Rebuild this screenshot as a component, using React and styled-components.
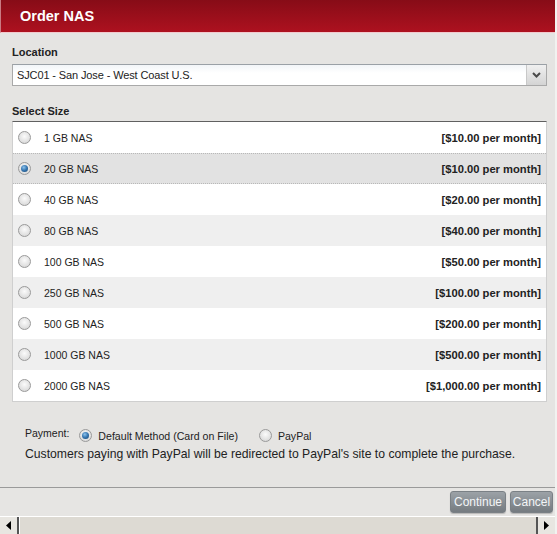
import React from "react";
import styled, { createGlobalStyle } from "styled-components";

const Global = createGlobalStyle`
  html, body { margin: 0; padding: 0; background: #e5e4e2; }
  body { font-family: "Liberation Sans", Arial, sans-serif; color: #222; }
`;

const Dialog = styled.div`
  width: 557px;
  height: 534px;
  display: flex;
  flex-direction: column;
  background: #e5e4e2;
  box-sizing: border-box;
  border-right: 2px solid #f2f2f0;
  overflow: hidden;
`;

const Header = styled.div`
  height: 32px;
  flex: none;
  display: flex;
  align-items: center;
  padding-left: 19px;
  background: linear-gradient(#870c17, #ad111f);
  border-bottom: 1px solid #f2c9cd;
  border-left: 1px solid #c97a82;
  color: #fff;
  font-family: "Liberation Sans", Arial, sans-serif;
  font-weight: bold;
  font-size: 14.5px;
`;

const Body = styled.div`
  flex: 1;
  padding: 12px 8px 0 12px;
  display: flex;
  flex-direction: column;
`;

const Label = styled.div`
  font-weight: bold;
  font-size: 11px;
  line-height: 14px;
  color: #222;
  margin-top: ${(p) => p.$mt || 0}px;
`;

const Select = styled.div`
  margin-top: 5px;
  height: 22px;
  box-sizing: border-box;
  border: 1px solid #a9a9a9;
  border-top-color: #9aa0a6;
  background: linear-gradient(#f2f5f8, #fff 40%);
  display: flex;
  align-items: center;
  font-size: 11px;
  letter-spacing: -0.12px;
  color: #222;
`;

const SelectText = styled.div`
  flex: 1;
  padding-left: 4px;
`;

const SelectArrow = styled.div`
  width: 19px;
  height: 20px;
  border-left: 1px solid #c8c8c8;
  background: linear-gradient(#f0f0f0, #d4d4d4);
  display: flex;
  align-items: center;
  justify-content: center;
`;

const List = styled.div`
  margin-top: 3px;
  border: 1px solid #cfcfcf;
  border-top: 1px solid #606060;
  background: #fff;
  display: flex;
  flex-direction: column;
`;

const Row = styled.div`
  height: 31px;
  box-sizing: border-box;
  display: flex;
  align-items: center;
  padding: 0 5px 0 5px;
  background: ${(p) => (p.$selected ? "#e2e2e2" : p.$alt ? "#efefef" : "#fff")};
  border-top: 1px dotted ${(p) => (p.$selected ? "#b8b8b8" : "transparent")};
  border-bottom: 1px dotted ${(p) => (p.$selected ? "#b8b8b8" : "transparent")};
`;

const RowLabel = styled.div`
  flex: 1;
  font-size: 10.5px;
  color: #222;
  margin-left: 13px;
`;

const Price = styled.div`
  font-size: 11.2px;
  font-weight: bold;
  color: #222;
`;

const Radio = styled.span`
  width: 11px;
  height: 11px;
  flex: none;
  border-radius: 50%;
  border: 1px solid #9a9a9a;
  background: radial-gradient(circle at 50% 40%, #fbfbfb 0%, #e2e2e2 60%, #cfcfcf 100%);
  display: inline-flex;
  align-items: center;
  justify-content: center;
  box-sizing: content-box;
  &::after {
    content: "";
    display: ${(p) => (p.$checked ? "block" : "none")};
    width: 7px;
    height: 7px;
    border-radius: 50%;
    background: radial-gradient(circle at 40% 35%, #8ec3ec 0%, #3b7bb5 45%, #0f3f6c 100%);
  }
`;

const Payment = styled.div`
  margin: 27px 0 0 13px;
  display: flex;
  flex-direction: column;
  gap: 5px;
`;

const PayRow = styled.div`
  display: flex;
  align-items: center;
  font-size: 10.6px;
  color: #222;
`;

const PayLabel = styled.span`
  font-size: 10.5px;
  position: relative;
  top: -3px;
  margin-right: 10px;
`;

const PayOption = styled.label`
  display: inline-flex;
  align-items: center;
  gap: 6px;
  margin-right: ${(p) => p.$mr || 0}px;
`;

const Note = styled.div`
  font-size: 12.2px;
  color: #222;
`;

const Footer = styled.div`
  height: 28px;
  flex: none;
  border-top: 1px solid #9a9a9a;
  display: flex;
  justify-content: flex-end;
  align-items: center;
  padding: 0 2px 0 0;
  gap: 4px;
  background: #e6e5e3;
`;

const Button = styled.button`
  height: 22px;
  padding: 0;
  border: 1px solid #7a8085;
  border-radius: 3px;
  background: linear-gradient(#9ca2a7, #757b80);
  color: #f3f5f7;
  font-family: "Liberation Sans", Arial, sans-serif;
  font-size: 12px;
  box-shadow: 0 1px 1px rgba(0, 0, 0, 0.2);
  width: ${(p) => p.$w}px;
`;

const Scrollbar = styled.div`
  height: 17px;
  flex: none;
  display: flex;
  background: #e0ded8;
  border-top: 1px solid #ffffff;
`;

const ScrollBtn = styled.div`
  width: 17px;
  flex: none;
  display: flex;
  align-items: center;
  justify-content: center;
  background: #e8e6e1;
  border-left: ${(p) => (p.$side === "right" ? "2px solid #555" : "none")};
  border-right: ${(p) => (p.$side === "left" ? "2px solid #555" : "none")};
`;

const Track = styled.div`
  flex: 1;
  background: #dddad3;
  border-left: 1px solid #fff;
`;

const sizes = [
  ["1 GB NAS", "[$10.00 per month]"],
  ["20 GB NAS", "[$10.00 per month]"],
  ["40 GB NAS", "[$20.00 per month]"],
  ["80 GB NAS", "[$40.00 per month]"],
  ["100 GB NAS", "[$50.00 per month]"],
  ["250 GB NAS", "[$100.00 per month]"],
  ["500 GB NAS", "[$200.00 per month]"],
  ["1000 GB NAS", "[$500.00 per month]"],
  ["2000 GB NAS", "[$1,000.00 per month]"],
];

export default function App() {
  return (
    <>
      <Global />
      <Dialog>
        <Header>Order NAS</Header>
        <Body>
          <Label>Location</Label>
          <Select>
            <SelectText>SJC01 - San Jose - West Coast U.S.</SelectText>
            <SelectArrow>
              <svg width="9" height="6" viewBox="0 0 9 6">
                <path d="M1 1 L4.5 4.5 L8 1" fill="none" stroke="#4a4a4a" strokeWidth="2" />
              </svg>
            </SelectArrow>
          </Select>
          <Label $mt={18}>Select Size</Label>
          <List>
            {sizes.map(([name, price], i) => (
              <Row key={name} $selected={i === 1} $alt={i % 2 === 1}>
                <Radio $checked={i === 1} />
                <RowLabel>{name}</RowLabel>
                <Price>{price}</Price>
              </Row>
            ))}
          </List>
          <Payment>
            <PayRow>
              <PayLabel>Payment:</PayLabel>
              <PayOption $mr={21}>
                <Radio $checked />
                Default Method (Card on File)
              </PayOption>
              <PayOption>
                <Radio />
                PayPal
              </PayOption>
            </PayRow>
            <Note>
              Customers paying with PayPal will be redirected to PayPal's site to complete the purchase.
            </Note>
          </Payment>
        </Body>
        <Footer>
          <Button $w={56}>Continue</Button>
          <Button $w={43}>Cancel</Button>
        </Footer>
        <Scrollbar>
          <ScrollBtn $side="left">
            <svg width="5" height="9" viewBox="0 0 5 9">
              <path d="M5 0 L0 4.5 L5 9 Z" fill="#000" />
            </svg>
          </ScrollBtn>
          <Track />
          <ScrollBtn $side="right">
            <svg width="5" height="9" viewBox="0 0 5 9">
              <path d="M0 0 L5 4.5 L0 9 Z" fill="#000" />
            </svg>
          </ScrollBtn>
        </Scrollbar>
      </Dialog>
    </>
  );
}
